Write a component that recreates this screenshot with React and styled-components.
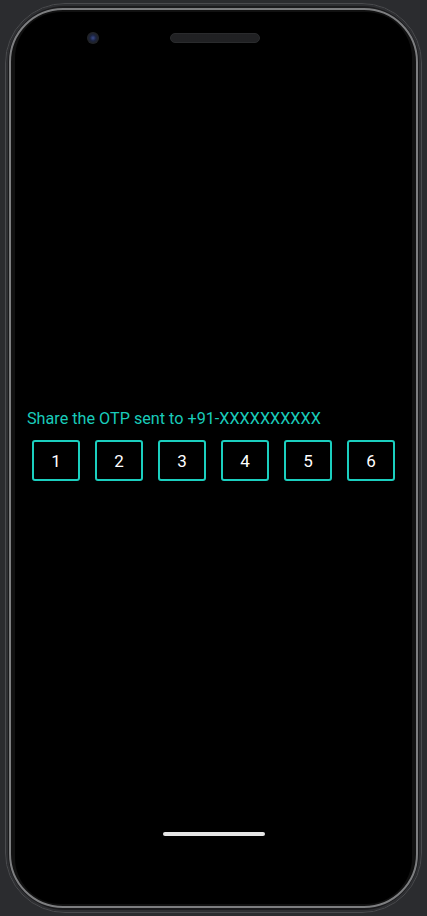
import React from "react"
import styled, { createGlobalStyle } from "styled-components"

const GlobalStyle = createGlobalStyle`
  html, body {
    margin: 0;
    padding: 0;
    background: #2b2c2f;
  }
  body {
    font-family: Roboto, "Liberation Sans", sans-serif;
  }
`

const Page = styled.div`
  width: 427px;
  height: 916px;
  padding: 3px 5px;
  box-sizing: border-box;
`

const Body = styled.div`
  height: 100%;
  box-sizing: border-box;
  border-radius: 60px;
  background: #1b1b1d;
  border: 1px solid #4a4b4e;
  box-shadow: inset 0 0 0 2px #2e2f32;
  padding: 4px 3px;
`

const Rim = styled.div`
  height: 100%;
  box-sizing: border-box;
  border-radius: 54px;
  border: 2px solid #7d7e80;
  background: #111;
  padding: 2px 4px;
`

const Screen = styled.div`
  height: 100%;
  box-sizing: border-box;
  border-radius: 46px;
  background: #000;
  display: flex;
  flex-direction: column;
  padding: 20px 0 0;
`

const TopBar = styled.div`
  display: flex;
  align-items: center;
  height: 12px;
  padding-left: 72px;
`

const Camera = styled.div`
  width: 12px;
  height: 12px;
  border-radius: 50%;
  background: radial-gradient(circle at 50% 50%, #3a4a8a 0, #1b2340 35%, #202226 60%, #2e3034 100%);
`

const Speaker = styled.div`
  margin-left: 71px;
  width: 88px;
  height: 8px;
  border-radius: 5px;
  background-color: #121314;
  background-image: radial-gradient(#303134 0.6px, transparent 0.8px);
  background-size: 2px 2px;
  border: 1px solid #2a2b2d;
`

const Content = styled.div`
  margin-top: 364px;
  padding: 0 12px;
`

const Prompt = styled.p`
  margin: 0;
  color: #19cbba;
  font-size: 16.2px;
  line-height: 21px;
`

const Digits = styled.div`
  margin-top: 11px;
  padding: 0 5px;
  display: flex;
  justify-content: space-between;
`

const DigitBox = styled.div`
  width: 48px;
  height: 41px;
  box-sizing: border-box;
  border: 2px solid #1bcfbf;
  border-radius: 3px;
  display: flex;
  align-items: center;
  justify-content: center;
  color: #fff;
  font-size: 17px;
`

const HomeBar = styled.div`
  margin: auto auto 68px;
  width: 102px;
  height: 4px;
  border-radius: 2px;
  background: #e6e6e6;
`

const otp = ["1", "2", "3", "4", "5", "6"]

const App = () => (
  <>
    <GlobalStyle />
    <Page>
      <Body>
        <Rim>
          <Screen>
            <TopBar>
              <Camera />
              <Speaker />
            </TopBar>

            <Content>
              <Prompt>Share the OTP sent to +91-XXXXXXXXXX</Prompt>
              <Digits>
                {otp.map((d, i) => (
                  <DigitBox key={i}>{d}</DigitBox>
                ))}
              </Digits>
            </Content>

            <HomeBar />
          </Screen>
        </Rim>
      </Body>
    </Page>
  </>
)

export default App
